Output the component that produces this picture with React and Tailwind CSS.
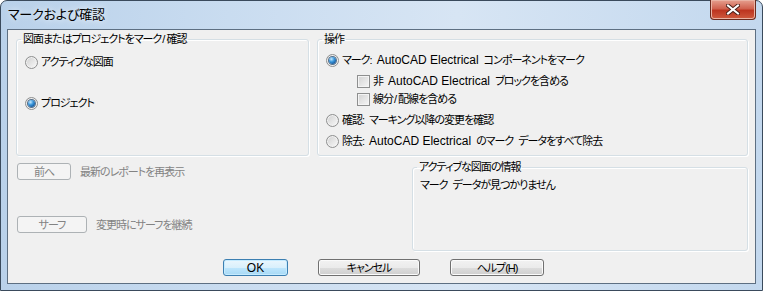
import React from 'react';

const font = "[font-family:'Liberation_Sans','Noto_Sans_CJK_JP',sans-serif] [font-feature-settings:'palt']";

function Radio({ checked }) {
  return (
    <span className="flex h-[13px] w-[13px] shrink-0 items-center justify-center rounded-full border border-[#8e8f8f] bg-[linear-gradient(135deg,#cfcfcf,#fafafa)] shadow-[inset_0_0_0_1px_#f2f2f2]">
      {checked && (
        <span className="h-[7px] w-[7px] rounded-full bg-[radial-gradient(circle_at_35%_30%,#c6e9ff_0%,#3c98dc_40%,#0d4a8e_85%)] shadow-[0_0_0_1px_#56708a]" />
      )}
    </span>
  );
}

function Check() {
  return (
    <span className="h-[13px] w-[13px] shrink-0 border border-[#8e8f8f] bg-[linear-gradient(135deg,#d2d2d2,#f6f6f6)] shadow-[inset_0_0_0_1px_#f4f4f4]" />
  );
}

// latin runs keep the wider 12px face, kana/kanji are squeezed like MS UI Gothic
function L({ children }) {
  return <span className="text-[12px] tracking-normal">{children}</span>;
}

function Sp() {
  return <span className="inline-block w-[5px]" />;
}

function Slash() {
  return <span className="px-[1px] tracking-normal">/</span>;
}

function Group({ title, className, children }) {
  return (
    <fieldset className={`rounded-[3px] border border-[#d5dfe5] shadow-[inset_1px_1px_0_#ffffff,1px_1px_0_#ffffff] ${className}`}>
      <legend className="ml-[4px] px-[2px] text-[11px] leading-[14px] tracking-[-1px]">{title}</legend>
      {children}
    </fieldset>
  );
}

function Option({ children, className = '' }) {
  return (
    <div className={`flex h-[14px] items-center gap-[3px] text-[11px] leading-[14px] tracking-[-1px] ${className}`}>
      {children}
    </div>
  );
}

export default function App() {
  return (
    <div className={`flex h-[291px] w-[763px] flex-col rounded-t-[7px] border border-[#3a4a5c] bg-[linear-gradient(90deg,#b9d1ea,#c9dcf0_30%,#d7e5f4_60%,#c3d8ee)] text-black ${font}`}>
      <div className="flex h-[28px] shrink-0 items-start justify-between pl-[7px] pr-[6px]">
        <span className="mt-[6px] text-[13px] leading-[16px] tracking-[-0.2px] [text-shadow:0_0_6px_#ffffff]">マークおよび確認</span>
        <button className="-mt-[1px] flex h-[20px] w-[46px] items-center justify-center rounded-b-[4px] border border-t-0 border-[#6b2a1e] bg-[linear-gradient(#e6a08f_0%,#d0624f_45%,#bd3520_55%,#cf5a3e_100%)] shadow-[inset_0_0_0_1px_#eab3a4]">
          <svg width="14" height="11" viewBox="0 0 14 11">
            <path d="M2 1.5 L12 9.5 M12 1.5 L2 9.5" stroke="#4a1f18" strokeWidth="4" strokeLinecap="square" />
            <path d="M2 1.5 L12 9.5 M12 1.5 L2 9.5" stroke="#ffffff" strokeWidth="2" strokeLinecap="square" />
          </svg>
        </button>
      </div>

      <div className="mx-[6px] flex h-[255px] shrink-0 flex-col border border-[#5d6f82] bg-[#f0f0f0]">
        <div className="flex gap-[8px] pl-[8px] pt-[2px]">
          <Group title={<>図面またはプロジェクトをマーク<Slash />確認</>} className="h-[124px] w-[293px]">
            <div className="pl-[8px] pt-[9px]">
              <Option>
                <Radio />
                <span>アクティブな図面</span>
              </Option>
              <Option className="mt-[27px]">
                <Radio checked />
                <span>プロジェクト</span>
              </Option>
            </div>
          </Group>
          <Group title="操作" className="h-[124px] w-[431px]">
            <div className="pl-[8px] pt-[7px]">
              <Option>
                <Radio checked />
                <span>マーク:<Sp /><L>AutoCAD Electrical</L><Sp />コンポーネントをマーク</span>
              </Option>
              <Option className="ml-[31px] mt-[7px]">
                <Check />
                <span>非<Sp /><L>AutoCAD Electrical</L><Sp />ブロックを含める</span>
              </Option>
              <Option className="ml-[31px] mt-[4px]">
                <Check />
                <span>線分<Slash />配線を含める</span>
              </Option>
              <Option className="mt-[7px]">
                <Radio />
                <span>確認:<Sp />マーキング以降の変更を確認</span>
              </Option>
              <Option className="mt-[7px]">
                <Radio />
                <span>除去:<Sp /><L>AutoCAD Electrical</L><Sp />のマーク<Sp />データをすべて除去</span>
              </Option>
            </div>
          </Group>
        </div>

        <div className="flex pl-[8px]">
          <div className="w-[396px] text-[11px] leading-[14px] tracking-[-1px] text-[#838383]">
            <div className="ml-[1px] mt-[7px] flex items-center gap-[9px]">
              <span className="flex h-[17px] w-[54px] items-center justify-center rounded-[3px] border border-[#adb2b5] bg-[#f4f4f4]">前へ</span>
              <span>最新のレポートを再表示</span>
            </div>
            <div className="ml-[1px] mt-[36px] flex items-center gap-[9px]">
              <span className="flex h-[17px] w-[70px] items-center justify-center rounded-[3px] border border-[#adb2b5] bg-[#f4f4f4]">サーフ</span>
              <span>変更時にサーフを継続</span>
            </div>
          </div>
          <Group title="アクティブな図面の情報" className="mt-[4px] h-[91px] w-[336px]">
            <div className="pl-[7px] pt-[4px] text-[11px] leading-[14px] tracking-[-1px]">マーク<Sp />データが見つかりません</div>
          </Group>
        </div>

        <div className="mt-[8px] flex gap-[30px] pl-[215px] text-[11px] leading-[14px] tracking-[-1px]">
          <button className="flex h-[17px] w-[65px] items-center justify-center rounded-[3px] border border-[#3c7fb1] bg-[linear-gradient(#eaf6fd_0%,#d9f0fc_50%,#bee6fd_51%,#a7d9f5_100%)] shadow-[inset_0_0_0_1px_#c5ebff]"><L>OK</L></button>
          <button className="flex h-[17px] w-[102px] items-center justify-center rounded-[3px] border border-[#707070] bg-[linear-gradient(#f2f2f2_0%,#ebebeb_50%,#dddddd_51%,#cfcfcf_100%)] shadow-[inset_0_0_0_1px_#fbfbfb]">キャンセル</button>
          <button className="flex h-[17px] w-[94px] items-center justify-center rounded-[3px] border border-[#707070] bg-[linear-gradient(#f2f2f2_0%,#ebebeb_50%,#dddddd_51%,#cfcfcf_100%)] shadow-[inset_0_0_0_1px_#fbfbfb]">ヘルプ(H)</button>
        </div>
      </div>
    </div>
  );
}
